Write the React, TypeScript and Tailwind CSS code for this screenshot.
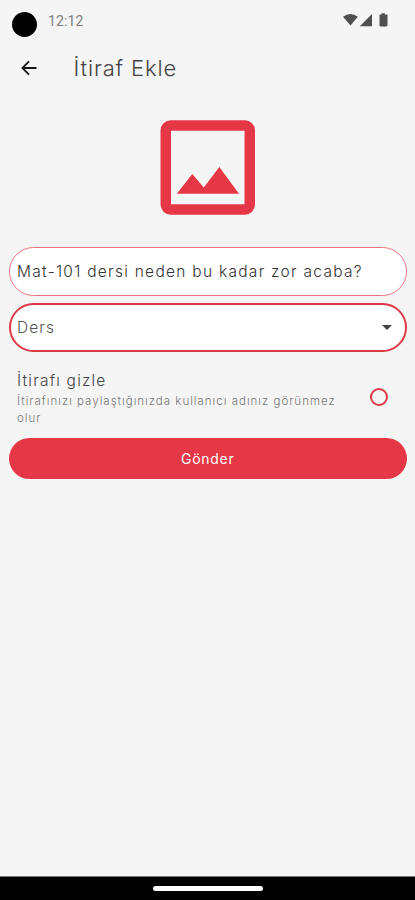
import { useState } from "react";

function StatusBar() {
  return (
    <div className="flex h-11 items-start pl-3 pr-[27px]">
      <div className="mt-3 size-[25px] shrink-0 rounded-full bg-black" />
      <span className="ml-[11px] mt-[11px] font-[Roboto] text-[14px] leading-5 tracking-[0.1px] text-[#808080]">
        12:12
      </span>
      <svg
        className="ml-auto mt-[13px] h-[14px] w-[45px]"
        viewBox="0 0 45 14"
        fill="#505050"
      >
        <path d="M0 3.8Q7.3-2 14.8 3.8L7.5 12.6Z" />
        <path d="M29 1V13.2H16.8Z" />
        <path d="M36.5 2.2Q36.5 1.4 37.3 1.4H38.6V.2H41.8V1.4H43.7Q44.5 1.4 44.5 2.2V12.6Q44.5 13.4 43.7 13.4H37.3Q36.5 13.4 36.5 12.6Z" />
      </svg>
    </div>
  );
}

function Header() {
  return (
    <header className="flex h-12 items-center pl-[21px]">
      <svg
        className="size-4"
        viewBox="0 0 16 16"
        fill="none"
        stroke="#151515"
        strokeWidth="1.8"
      >
        <path d="M15.5 8H1.6M8 1.4L1.4 8L8 14.6" />
      </svg>
      <h1 className="ml-[36.5px] text-[22px] font-light tracking-[0.85px] text-[#444]">
        İtiraf Ekle
      </h1>
    </header>
  );
}

export default function App() {
  const [text, setText] = useState("Mat-101 dersi neden bu kadar zor acaba?");
  const [hidden, setHidden] = useState(false);

  return (
    <div className="flex h-[900px] w-full flex-col bg-[#f5f5f5] font-[Inter,sans-serif]">
      <StatusBar />
      <Header />

      <main className="flex flex-1 flex-col pl-[8.5px] pr-2">
        <button type="button" className="mt-7 self-center">
          <svg className="size-[95px]" viewBox="0 0 95 95">
            <rect
              x="5.75"
              y="5.5"
              width="84"
              height="84"
              rx="5"
              fill="none"
              stroke="#e63746"
              strokeWidth="10.5"
            />
            <path
              d="M16.8 73.8L32.3 54L43.8 67.5L59.3 47L79 73.8Z"
              fill="#e63746"
            />
          </svg>
        </button>

        <input
          value={text}
          onChange={(e) => setText(e.target.value)}
          className="mt-8 h-[49px] w-full rounded-full border border-[#e8767e] bg-white px-[7.5px] text-[15.5px] font-light tracking-[1.28px] text-[#333] outline-none"
        />

        <button
          type="button"
          className="mt-[7px] flex h-[49px] w-full items-center justify-between rounded-full border-2 border-[#dc3a45] bg-white pl-[6.5px] pr-[13px] text-[15.5px] font-light tracking-[1.1px] text-[#555]"
        >
          Ders
          <svg className="h-[5px] w-[10px]" viewBox="0 0 10 5" fill="#444">
            <path d="M0 0H10L5 5Z" />
          </svg>
        </button>

        <label className="mt-[16px] flex h-[60px] items-center justify-between pl-[8.5px] pr-[19px]">
          <span className="flex flex-col">
            <span className="mb-px text-[15.5px] font-light leading-[23px] tracking-[1.2px] text-[#444]">
              İtirafı gizle
            </span>
            <span className="w-[330px] whitespace-nowrap text-[11.5px] font-light leading-[17px] tracking-[1px] text-[#777]">
              İtirafınızı paylaştığınızda kullanıcı adınız görünmez
              <br />
              olur
            </span>
          </span>
          <input
            type="checkbox"
            checked={hidden}
            onChange={(e) => setHidden(e.target.checked)}
            className="mb-[3px] size-[18px] shrink-0 appearance-none rounded-full border-2 border-[#dc3a45] checked:bg-[#e63746]"
          />
        </label>

        <button
          type="button"
          className="mt-[10px] h-[41px] w-full rounded-full bg-[#e63746] text-[14px] tracking-[0.7px] text-white"
        >
          Gönder
        </button>
      </main>

      <div className="flex h-6 items-start justify-center border-t border-[#777] bg-black pt-[9px]">
        <div className="h-[5px] w-[110px] rounded-full bg-white" />
      </div>
    </div>
  );
}
